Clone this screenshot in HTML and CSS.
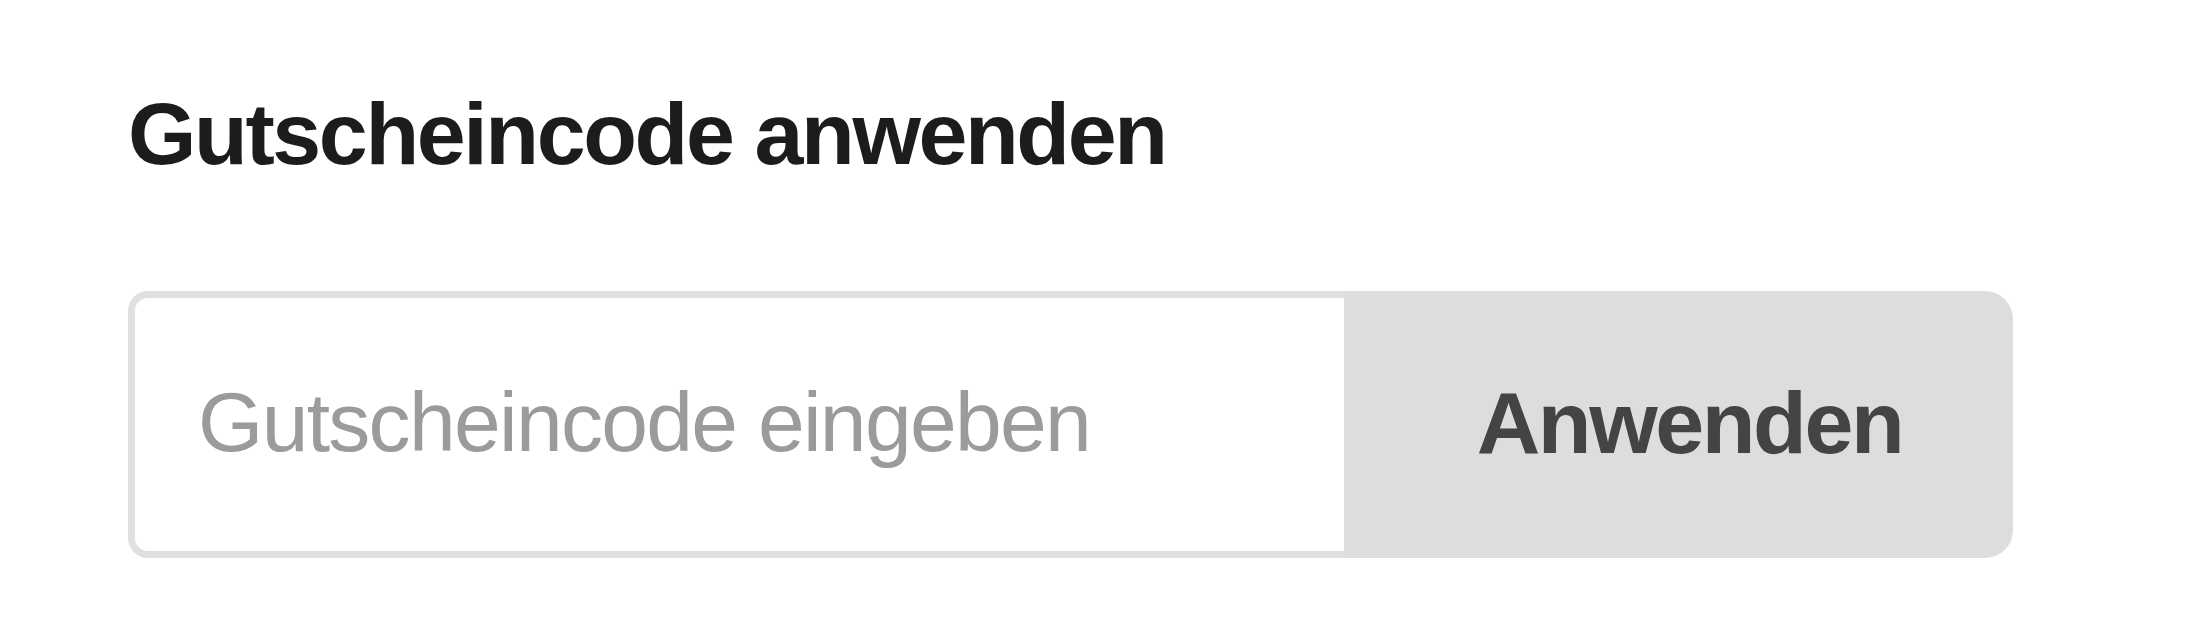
FILE: index.html
```html
<!DOCTYPE html>
<html lang="de">
<head>
    <meta charset="UTF-8">
    <meta name="viewport" content="width=device-width, initial-scale=1.0">
    <title>Gutscheincode anwenden</title>
    <link rel="stylesheet" href="styles.css">
</head>
<body>
    <section class="coupon">
        <h2 class="coupon-title">Gutscheincode anwenden</h2>
        <form class="coupon-form">
            <input class="coupon-input" type="text" placeholder="Gutscheincode eingeben">
            <button class="coupon-btn" type="button">Anwenden</button>
        </form>
    </section>
</body>
</html>
```

FILE: styles.css
```css
* {
    margin: 0;
    padding: 0;
    box-sizing: border-box;
}
body {
    font-family: 'Liberation Sans', Arial, sans-serif;
    background: #ffffff;
    color: #1c1c1e;
}
.coupon {
    padding: 90px 0 0 128px;
}
.coupon-title {
    font-size: 88px;
    font-weight: 700;
    line-height: 88px;
    letter-spacing: -2.4px;
    color: #1c1c1e;
    margin-bottom: 113px;
}
.coupon-form {
    display: flex;
    width: 1885px;
    height: 267px;
}
.coupon-input {
    flex: 1;
    min-width: 0;
    border: 7px solid #e0e0e0;
    border-right: 0;
    border-radius: 20px 0 0 20px;
    padding: 0 0 4px 63px;
    font-family: 'Liberation Sans', Arial, sans-serif;
    font-size: 84px;
    letter-spacing: -1.7px;
    color: #333;
    background: #ffffff;
    outline: none;
}
.coupon-input::placeholder {
    color: #9b9b9b;
}
.coupon-btn {
    width: 669px;
    border: none;
    border-radius: 0 28px 28px 0;
    background: #dddddd;
    color: #444444;
    font-family: 'Liberation Sans', Arial, sans-serif;
    font-size: 88px;
    font-weight: 700;
    letter-spacing: -2.4px;
    padding: 0 0 4px 22px;
    cursor: pointer;
}
```
